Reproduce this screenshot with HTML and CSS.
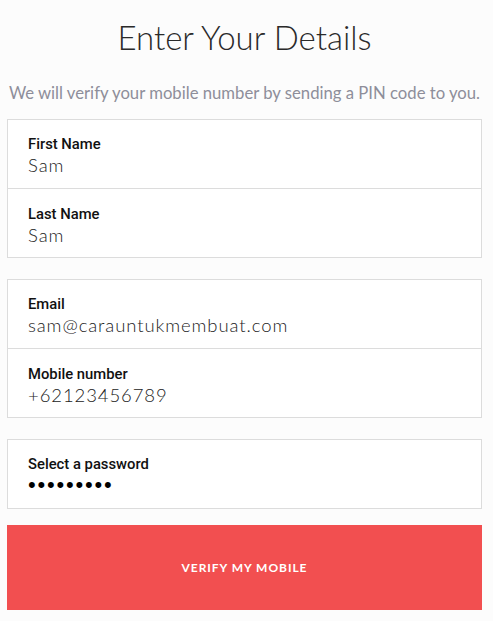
FILE: index.html
```html
<!DOCTYPE html>
<html>
<head>
<meta charset="utf-8">
<link rel="stylesheet" href="styles.css">
</head>
<body>
<div class="page">
  <h1 class="title">Enter Your Details</h1>
  <p class="subtitle">We will verify your mobile number by sending a PIN code to you.</p>
  <div class="group">
    <div class="field">
      <div class="label">First Name</div>
      <div class="value">Sam</div>
    </div>
    <div class="field">
      <div class="label">Last Name</div>
      <div class="value">Sam</div>
    </div>
  </div>
  <div class="group">
    <div class="field">
      <div class="label">Email</div>
      <div class="value">sam@carauntukmembuat.com</div>
    </div>
    <div class="field">
      <div class="label">Mobile number</div>
      <div class="value">+62123456789</div>
    </div>
  </div>
  <div class="group">
    <div class="field">
      <div class="label">Select a password</div>
      <div class="value dots">•••••••••</div>
    </div>
  </div>
  <button class="verify">VERIFY MY MOBILE</button>
</div>
</body>
</html>
```

FILE: styles.css
```css
html, body {
  margin: 0;
  padding: 0;
  background: #fcfcfc;
}
.page {
  width: 475px;
  margin-left: 7px;
  display: flex;
  flex-direction: column;
  font-family: "Lato", "Open Sans", sans-serif;
}
.title {
  margin: 17px 0 0;
  text-align: center;
  font-family: "Lato", sans-serif;
  font-weight: 300;
  font-size: 33px;
  line-height: 40px;
  color: #2a2a2a;
}
.subtitle {
  margin: 26px 0 16px;
  text-align: center;
  font-size: 16.7px;
  font-weight: 400;
  line-height: 20px;
  color: #8e8e9a;
  white-space: nowrap;
}
.group {
  background: #fff;
  border: 1px solid #dcdcdc;
  margin-bottom: 21px;
}
.field {
  height: 68px;
  box-sizing: border-box;
  padding: 16px 20px 0;
}
.field + .field {
  height: 69px;
  padding-top: 17px;
  border-top: 1px solid #dcdcdc;
}
.label {
  font-family: "Roboto", sans-serif;
  font-weight: 500;
  font-size: 14.8px;
  line-height: 17px;
  color: #111;
}
.value {
  margin-top: 2px;
  font-family: "Lato", sans-serif;
  font-weight: 300;
  font-size: 18.5px;
  line-height: 21px;
  color: #222;
  letter-spacing: 0.9px;
}
.dots {
  font-family: "Liberation Sans", sans-serif;
  font-size: 22px;
  line-height: 22px;
  letter-spacing: 1.8px;
  color: #000;
  margin-top: 1px;
}
.verify {
  margin-top: -5px;
  height: 85px;
  border: none;
  background: #f24f50;
  color: #fff;
  font-family: "Lato", sans-serif;
  font-weight: 700;
  font-size: 12px;
  letter-spacing: 0.95px;
  padding: 0;
}
```
